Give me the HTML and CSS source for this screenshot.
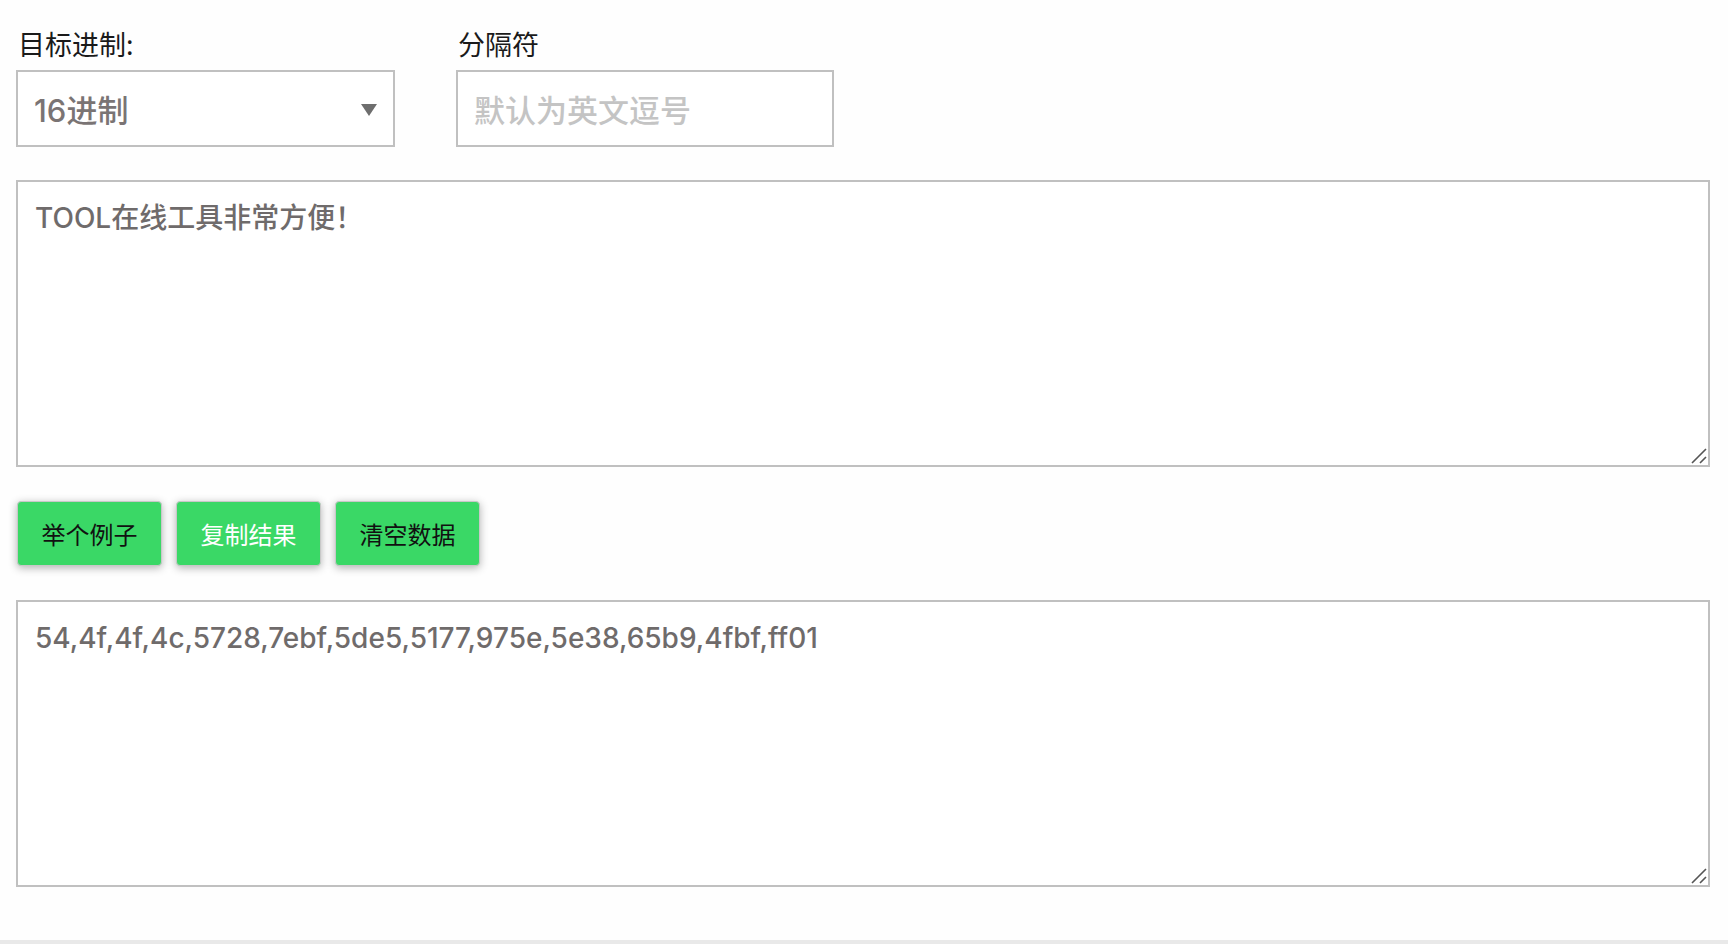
FILE: index.html
```html
<!DOCTYPE html>
<html lang="zh-CN">
<head>
    <meta charset="UTF-8">
    <meta name="viewport" content="width=device-width, initial-scale=1.0">
    <title>进制转换</title>
    <link rel="stylesheet" href="styles.css">
</head>
<body>
<div class="tool">
    <div class="form-row">
        <div class="field field-radix">
            <label for="radix">目标进制:</label>
            <div class="select-wrap">
                <select id="radix" class="input-field">
                    <option value="16">16进制</option>
                    <option value="10">10进制</option>
                    <option value="8">8进制</option>
                    <option value="2">2进制</option>
                </select>
                <svg class="select-arrow" width="16" height="12" viewBox="0 0 16 12"><path d="M0 0 H16 L8 12 Z" fill="#6e6e6e"/></svg>
            </div>
        </div>
        <div class="field field-sep">
            <label for="separator">分隔符</label>
            <input type="text" id="separator" class="input-field" placeholder="默认为英文逗号">
        </div>
    </div>

    <div class="box-wrap">
        <textarea id="source" class="text-box">TOOL在线工具非常方便！</textarea>
        <svg class="grip" width="16" height="16" viewBox="0 0 16 16"><path d="M1 15 L15 1 M9 15 L15 9" stroke="#555" stroke-width="1.6" fill="none"/></svg>
    </div>

    <div class="btn-container">
        <button type="button" class="btn">举个例子</button>
        <button type="button" class="btn btn-light">复制结果</button>
        <button type="button" class="btn">清空数据</button>
    </div>

    <div class="box-wrap">
        <textarea id="result" class="text-box">54,4f,4f,4c,5728,7ebf,5de5,5177,975e,5e38,65b9,4fbf,ff01</textarea>
        <svg class="grip" width="16" height="16" viewBox="0 0 16 16"><path d="M1 15 L15 1 M9 15 L15 9" stroke="#555" stroke-width="1.6" fill="none"/></svg>
    </div>
</div>
<div class="footer"></div>
</body>
</html>
```

FILE: styles.css
```css
body {
    margin: 0;
    padding: 0;
    background: #fefefe;
    font-family: "Liberation Sans", "Noto Sans CJK SC", sans-serif;
    color: #1a1a1a;
}
.tool {
    padding: 26px 18px 53px 16px;
}
.form-row {
    display: flex;
    gap: 61px;
}
.field {
    display: flex;
    flex-direction: column;
}
.field-radix {
    width: 379px;
}
.field-sep {
    width: 378px;
}
.field label {
    font-family: "Noto Sans CJK SC", sans-serif;
    font-size: 27px;
    line-height: 36px;
    margin: 0 0 8px 2px;
}
.select-wrap {
    position: relative;
}
.input-field {
    width: 100%;
    height: 77px;
    box-sizing: border-box;
    padding: 4px 16px 0 16px;
    border: 2px solid #c0c0c0;
    border-radius: 0;
    background: #fff;
    font-family: Inter, "Noto Sans CJK SC", sans-serif;
    font-size: 31px;
    font-weight: 500;
    color: #7a7474;
    outline: none;
}
select.input-field {
    appearance: none;
    -webkit-appearance: none;
}
.input-field::placeholder {
    color: #c4c4c4;
}
.select-arrow {
    position: absolute;
    right: 18px;
    top: 34px;
}
.box-wrap {
    position: relative;
    margin-top: 33px;
}
.btn-container + .box-wrap {
    margin-top: 34px;
}
.text-box {
    display: block;
    width: 100%;
    height: 287px;
    box-sizing: border-box;
    padding: 15px 17px;
    border: 2px solid #c0c0c0;
    background: #fff;
    font-family: Inter, "Noto Sans CJK SC", sans-serif;
    font-size: 28px;
    font-weight: 500;
    line-height: 42px;
    color: #6f6b6b;
    outline: none;
    resize: none;
}
.grip {
    position: absolute;
    right: 3px;
    bottom: 3px;
}
.btn-container {
    display: flex;
    gap: 14px;
    margin: 34px 0 0 1px;
}
.btn {
    width: 145px;
    height: 65px;
    padding: 0;
    background: #3ad866;
    border: 1px solid #c8c8c8;
    border-radius: 4px;
    box-shadow: 0 2px 9px rgba(0, 0, 0, 0.3);
    font-family: "Noto Sans CJK SC", sans-serif;
    font-size: 24px;
    color: #111;
}
.btn-light {
    color: #fff;
}
.footer {
    height: 6px;
    background: #e9e9e9;
}
```
